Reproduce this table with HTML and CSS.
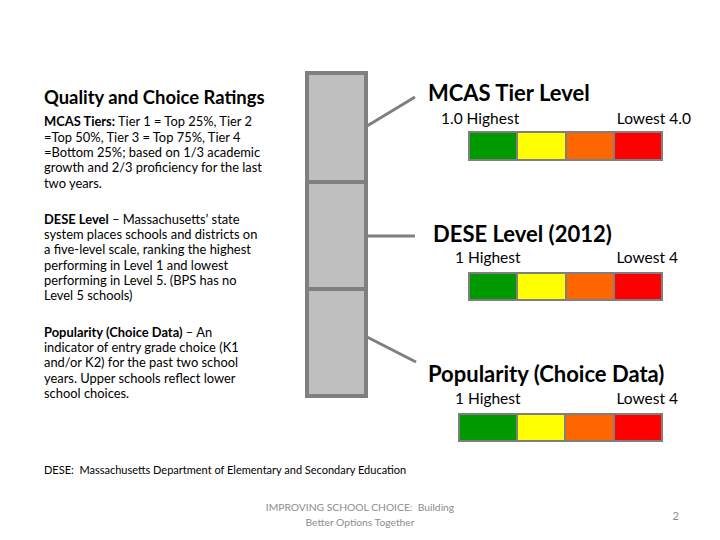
FILE: index.html
```html
<!DOCTYPE html>
<html lang="en">
<head>
<meta charset="utf-8">
<title>Quality and Choice Ratings</title>
<link rel="stylesheet" href="styles.css">
</head>
<body>
<div class="slide">
  <div class="main">
    <section class="legend">
      <h1 class="legend-title">Quality and Choice Ratings</h1>
      <p class="legend-p"><b>MCAS Tiers:</b> Tier 1 = Top 25%, Tier 2<br>=Top 50%, Tier 3 = Top 75%, Tier 4<br>=Bottom 25%; based on 1/3 academic<br>growth and 2/3 proficiency for the last<br>two years.</p>
      <p class="legend-p"><b>DESE Level</b> – Massachusetts’ state<br>system places schools and districts on<br>a five-level scale, ranking the highest<br>performing in Level 1 and lowest<br>performing in Level 5. (BPS has no<br>Level 5 schools)</p>
      <p class="legend-p"><b>Popularity (Choice Data)</b> – An<br>indicator of entry grade choice (K1<br>and/or K2) for the past two school<br>years. Upper schools reflect lower<br>school choices.</p>
    </section>

    <svg class="diagram" width="128" height="340" viewBox="0 0 128 340" aria-hidden="true">
      <rect x="7" y="8" width="59" height="323" fill="#bfbfbf" stroke="#7f7f7f" stroke-width="4"/>
      <line x1="7" y1="117" x2="66" y2="117" stroke="#7f7f7f" stroke-width="4"/>
      <line x1="7" y1="224" x2="66" y2="224" stroke="#7f7f7f" stroke-width="4"/>
      <line x1="67" y1="61" x2="115" y2="32" stroke="#7f7f7f" stroke-width="3"/>
      <line x1="67" y1="171" x2="115" y2="171" stroke="#7f7f7f" stroke-width="3"/>
      <line x1="67" y1="272" x2="116" y2="297" stroke="#7f7f7f" stroke-width="3"/>
    </svg>

    <div class="ratings">
      <div class="rating rating-1">
        <h2 class="rating-title">MCAS Tier Level</h2>
        <div class="rating-labels"><span>1.0 Highest</span><span>Lowest 4.0</span></div>
        <div class="scale"><i class="c green"></i><i class="c yellow"></i><i class="c orange"></i><i class="c red"></i></div>
      </div>
      <div class="rating rating-2">
        <h2 class="rating-title">DESE Level (2012)</h2>
        <div class="rating-labels"><span>1 Highest</span><span>Lowest 4</span></div>
        <div class="scale"><i class="c green"></i><i class="c yellow"></i><i class="c orange"></i><i class="c red"></i></div>
      </div>
      <div class="rating rating-3">
        <h2 class="rating-title">Popularity (Choice Data)</h2>
        <div class="rating-labels"><span>1 Highest</span><span>Lowest 4</span></div>
        <div class="scale"><i class="c green"></i><i class="c yellow"></i><i class="c orange"></i><i class="c red"></i></div>
      </div>
    </div>
  </div>

  <p class="note">DESE:&nbsp; Massachusetts Department of Elementary and Secondary Education</p>

  <footer class="footer">
    <span></span>
    <div class="footer-title">IMPROVING SCHOOL CHOICE:&nbsp; Building<br>Better Options Together</div>
    <span class="page-num">2</span>
  </footer>
</div>
</body>
</html>
```

FILE: styles.css
```css
html, body {
  margin: 0;
  padding: 0;
  background: #ffffff;
}

.slide {
  width: 720px;
  height: 540px;
  overflow: hidden;
  font-family: Lato, "Liberation Sans", sans-serif;
  color: #000;
}

.main {
  display: grid;
  grid-template-columns: 300px 128px 1fr;
  height: 380px;
  margin-top: 65px;
}

/* Left legend */
.legend {
  padding-left: 44px;
  padding-top: 20.9px;
}

.legend-title {
  margin: 0;
  font-size: 18.4px;
  line-height: 22px;
  font-weight: 700;
}

.legend-p {
  margin: 21px 0 0;
  font-size: 12.9px;
  line-height: 15.3px;
  white-space: nowrap;
}

.legend-title + .legend-p {
  margin-top: 6.5px;
}

.legend-p b {
  font-weight: 700;
}

/* Diagram */
.diagram {
  display: block;
}

/* Ratings */
.ratings {
  display: flex;
  flex-direction: column;
}

.rating-title {
  margin: 0;
  font-size: 22px;
  line-height: 26px;
  font-weight: 700;
  white-space: nowrap;
}

.rating-labels {
  display: flex;
  justify-content: space-between;
  font-size: 15.5px;
  line-height: 18px;
  white-space: nowrap;
}

.scale {
  display: grid;
  grid-template-columns: repeat(4, 1fr);
  gap: 2px;
  padding: 2px;
  background: #7f7f7f;
  box-sizing: border-box;
}

.c { display: block; }
.green { background: #009900; }
.yellow { background: #ffff00; }
.orange { background: #ff6600; }
.red { background: #ff0000; }

.rating-1 { padding-top: 14.5px; }
.rating-1 .rating-labels { margin: 3.5px 0 0 13px; width: 250px; }
.rating-1 .scale { margin: 4px 0 0 40px; width: 195px; height: 30px; }

.rating-2 { margin-top: 59.5px; }
.rating-2 .rating-title { padding-left: 5px; }
.rating-2 .rating-labels { margin: 1.5px 0 0 27px; width: 223px; }
.rating-2 .scale { margin: 6px 0 0 40px; width: 195px; height: 29px; }

.rating-3 { margin-top: 59.5px; }
.rating-3 .rating-labels { margin: 2.5px 0 0 27px; width: 223px; }
.rating-3 .scale { margin: 6px 0 0 30px; width: 205px; height: 29px; grid-template-columns: 56px 1fr 1fr 1fr; }

/* Note */
.note {
  margin: 18.2px 0 0 44px;
  font-size: 11px;
  line-height: 13px;
}

/* Footer */
.footer {
  display: grid;
  grid-template-columns: 1fr auto 1fr;
  align-items: center;
  margin-top: 24.3px;
  color: #8c8c8c;
  font-size: 10.3px;
  line-height: 15px;
}

.footer-title {
  text-align: center;
}

.page-num {
  justify-self: end;
  padding-right: 41px;
  font-size: 11px;
}
```
